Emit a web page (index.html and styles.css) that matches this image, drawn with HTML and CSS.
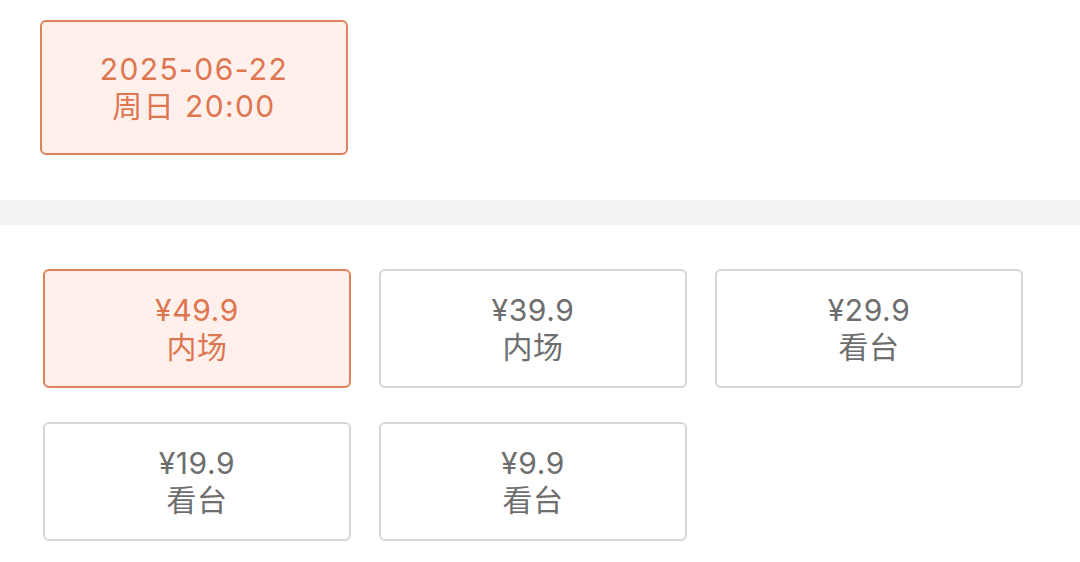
FILE: index.html
```html
<!DOCTYPE html>
<html lang="zh-CN">

<head>
    <meta charset="utf-8">
    <meta name="viewport" content="width=device-width, initial-scale=1.0">
    <title>选择场次和票档</title>
    <link rel="stylesheet" href="styles.css">
</head>

<body>

    <section class="sessions">
        <div class="option option--active session">
            <span>2025-06-22</span>
            <span>周日 20:00</span>
        </div>
    </section>

    <div class="divider"></div>

    <section class="prices">
        <div class="option option--active">
            <span>¥49.9</span>
            <span>内场</span>
        </div>
        <div class="option">
            <span>¥39.9</span>
            <span>内场</span>
        </div>
        <div class="option">
            <span>¥29.9</span>
            <span>看台</span>
        </div>
        <div class="option">
            <span>¥19.9</span>
            <span>看台</span>
        </div>
        <div class="option">
            <span>¥9.9</span>
            <span>看台</span>
        </div>
    </section>

</body>

</html>
```

FILE: styles.css
```css
body {
    margin: 0;
    background: #fff;
    font-family: Inter, "Noto Sans CJK SC", sans-serif;
}

.sessions {
    height: 200px;
    padding: 20px 0 0 40px;
    box-sizing: border-box;
}

.divider {
    height: 25px;
    background: #f2f2f2;
}

.prices {
    display: grid;
    grid-template-columns: repeat(3, 308px);
    column-gap: 28px;
    row-gap: 34px;
    padding: 44px 0 0 43px;
}

.option {
    display: flex;
    flex-direction: column;
    align-items: center;
    justify-content: center;
    height: 119px;
    box-sizing: border-box;
    border: 2px solid #d6d6d6;
    border-radius: 6px;
    color: #6e6e6e;
    font-size: 30px;
    line-height: 37px;
    letter-spacing: 0.6px;
}

.option--active {
    border-color: #de825b;
    background: #fff0ec;
    color: #de7650;
}

.session {
    width: 308px;
    height: 135px;
    letter-spacing: 1.4px;
}
```
